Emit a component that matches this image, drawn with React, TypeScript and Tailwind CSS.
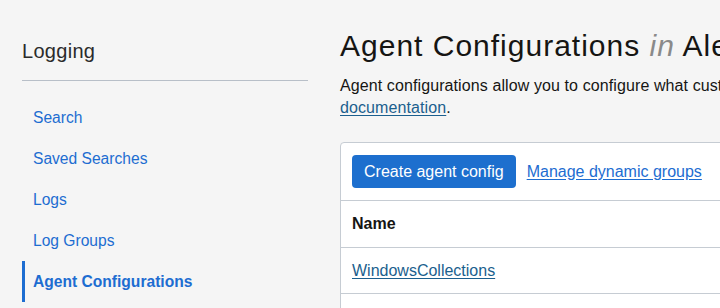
const navItems = ["Search", "Saved Searches", "Logs", "Log Groups", "Agent Configurations"];

export default function App() {
  const active = "Agent Configurations";

  return (
    <div
      className="flex w-[720px] h-[308px] overflow-hidden bg-[#f5f5f5] text-[#161513]"
      style={{ fontFamily: '"Liberation Sans", Arial, sans-serif' }}
    >
      <aside className="w-[308px] shrink-0 pl-[22px] pt-[37px]">
        <h2 className="text-[20px] leading-[28px] font-normal tracking-[0.3px] text-[#2b2b2b]">Logging</h2>
        <div className="mt-[15px] h-px bg-[#b8bfc8]" />
        <nav className="mt-[16px] flex flex-col">
          {navItems.map((item) =>
            item === active ? (
              <a
                key={item}
                className="h-[41px] flex items-center border-l-[3px] border-[#1d6dd1] pl-[8px] text-[15.6px] font-bold text-[#1d6dd1]"
              >
                {item}
              </a>
            ) : (
              <a key={item} className="h-[41px] flex items-center pl-[11px] text-[15.6px] text-[#1d6dd1]">
                {item}
              </a>
            )
          )}
        </nav>
      </aside>

      <main className="ml-[32px] w-[900px] shrink-0 pt-[28px]">
        <h1 className="text-[30px] leading-[36px] font-normal tracking-[1px] whitespace-nowrap">
          Agent Configurations <em className="text-[#8a8a8a]">in</em> Alexander (root)
        </h1>
        <p className="mt-[11px] text-[16px] leading-[22px] tracking-[0.1px] whitespace-nowrap">
          Agent configurations allow you to configure what custom logs the agent collects from your instances. For more
          information, see the
          <br />
          <a className="text-[#1b5f8e] underline underline-offset-2">documentation</a>.
        </p>

        <section className="mt-[23px] bg-white border border-[#c6ccd3] rounded-tl-[4px]">
          <div className="flex items-center gap-[11px] pl-[11px] pt-[12px] pb-[12px] border-b border-[#c6ccd3]">
            <button className="h-[33px] px-[12px] rounded-[4px] bg-[#1d6fce] text-white text-[16px]">
              Create agent config
            </button>
            <a className="text-[16px] text-[#1d6dd1] underline underline-offset-2">Manage dynamic groups</a>
          </div>
          <div className="h-[47px] flex items-center pl-[11px] border-b border-[#c6ccd3] text-[16px] font-bold">
            Name
          </div>
          <div className="h-[46px] flex items-center pl-[11px] border-b border-[#c6ccd3] text-[16px]">
            <a className="text-[#1b5f8e] underline underline-offset-2">WindowsCollections</a>
          </div>
          <div className="h-[46px]" />
        </section>
      </main>
    </div>
  );
}
